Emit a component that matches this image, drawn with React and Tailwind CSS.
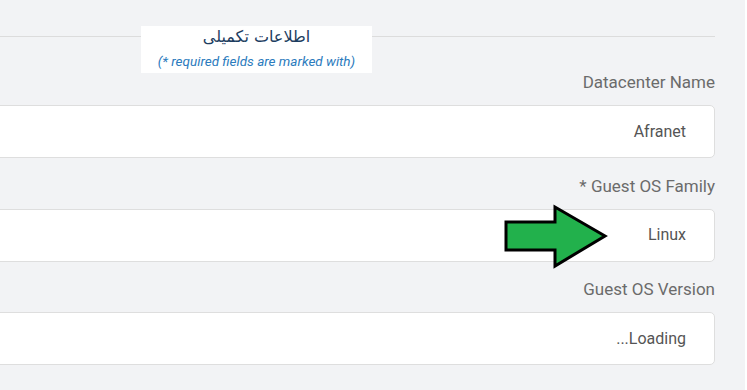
import React from 'react';

const fields = [
  { label: 'Datacenter Name', value: 'Afranet' },
  { label: 'Guest OS Family *', value: 'Linux' },
  { label: 'Guest OS Version', value: 'Loading...' },
];

const Arrow = () => (
  <svg className="absolute left-[500px] top-[200px]" width="112" height="74" viewBox="0 0 112 74">
    <polygon
      points="6,22 55,22 55,7 105,36 55,66 55,50 6,50"
      fill="#22b14c"
      stroke="#000"
      strokeWidth="3"
      strokeLinejoin="miter"
    />
  </svg>
);

const Field = ({ label, value }) => (
  <div className="flex flex-col">
    <div dir="rtl" className="text-[17px] leading-[20px] text-[#6b6b6b]">{label}</div>
    <div
      dir="rtl"
      className="mt-[13px] -ml-[12px] h-[53px] bg-white border border-[#dedede] rounded-[5px] flex items-center pr-[28px] text-[16px] text-[#555]"
    >
      {value}
    </div>
  </div>
);

export default function App() {
  return (
    <div className="relative w-[747px] h-[390px] bg-[#f2f3f5] flex overflow-hidden font-['Roboto',sans-serif]">
      <div className="flex-1 pr-[30px] flex flex-col">
        <div className="relative h-[72px]">
          <div className="absolute left-0 right-0 top-[36px] border-t border-[#dcdcdc]" />
          <div className="relative ml-[141px] mt-[26px] w-[231px] h-[47px] bg-white flex flex-col items-center">
            <div dir="rtl" className="text-[16px] leading-[22px] text-[#1d3d5f] font-['DejaVu_Sans',sans-serif]">
              اطلاعات تکمیلی
            </div>
            <div className="mt-[5px] text-[13.5px] leading-[16px] italic text-[#2b7bbd]">
              (* required fields are marked with)
            </div>
          </div>
        </div>
        <div className="flex flex-col gap-[17.5px]">
          {fields.map((f) => (
            <Field key={f.label} label={f.label} value={f.value} />
          ))}
        </div>
      </div>
      <div className="w-[2px] bg-white" />
      <Arrow />
    </div>
  );
}
